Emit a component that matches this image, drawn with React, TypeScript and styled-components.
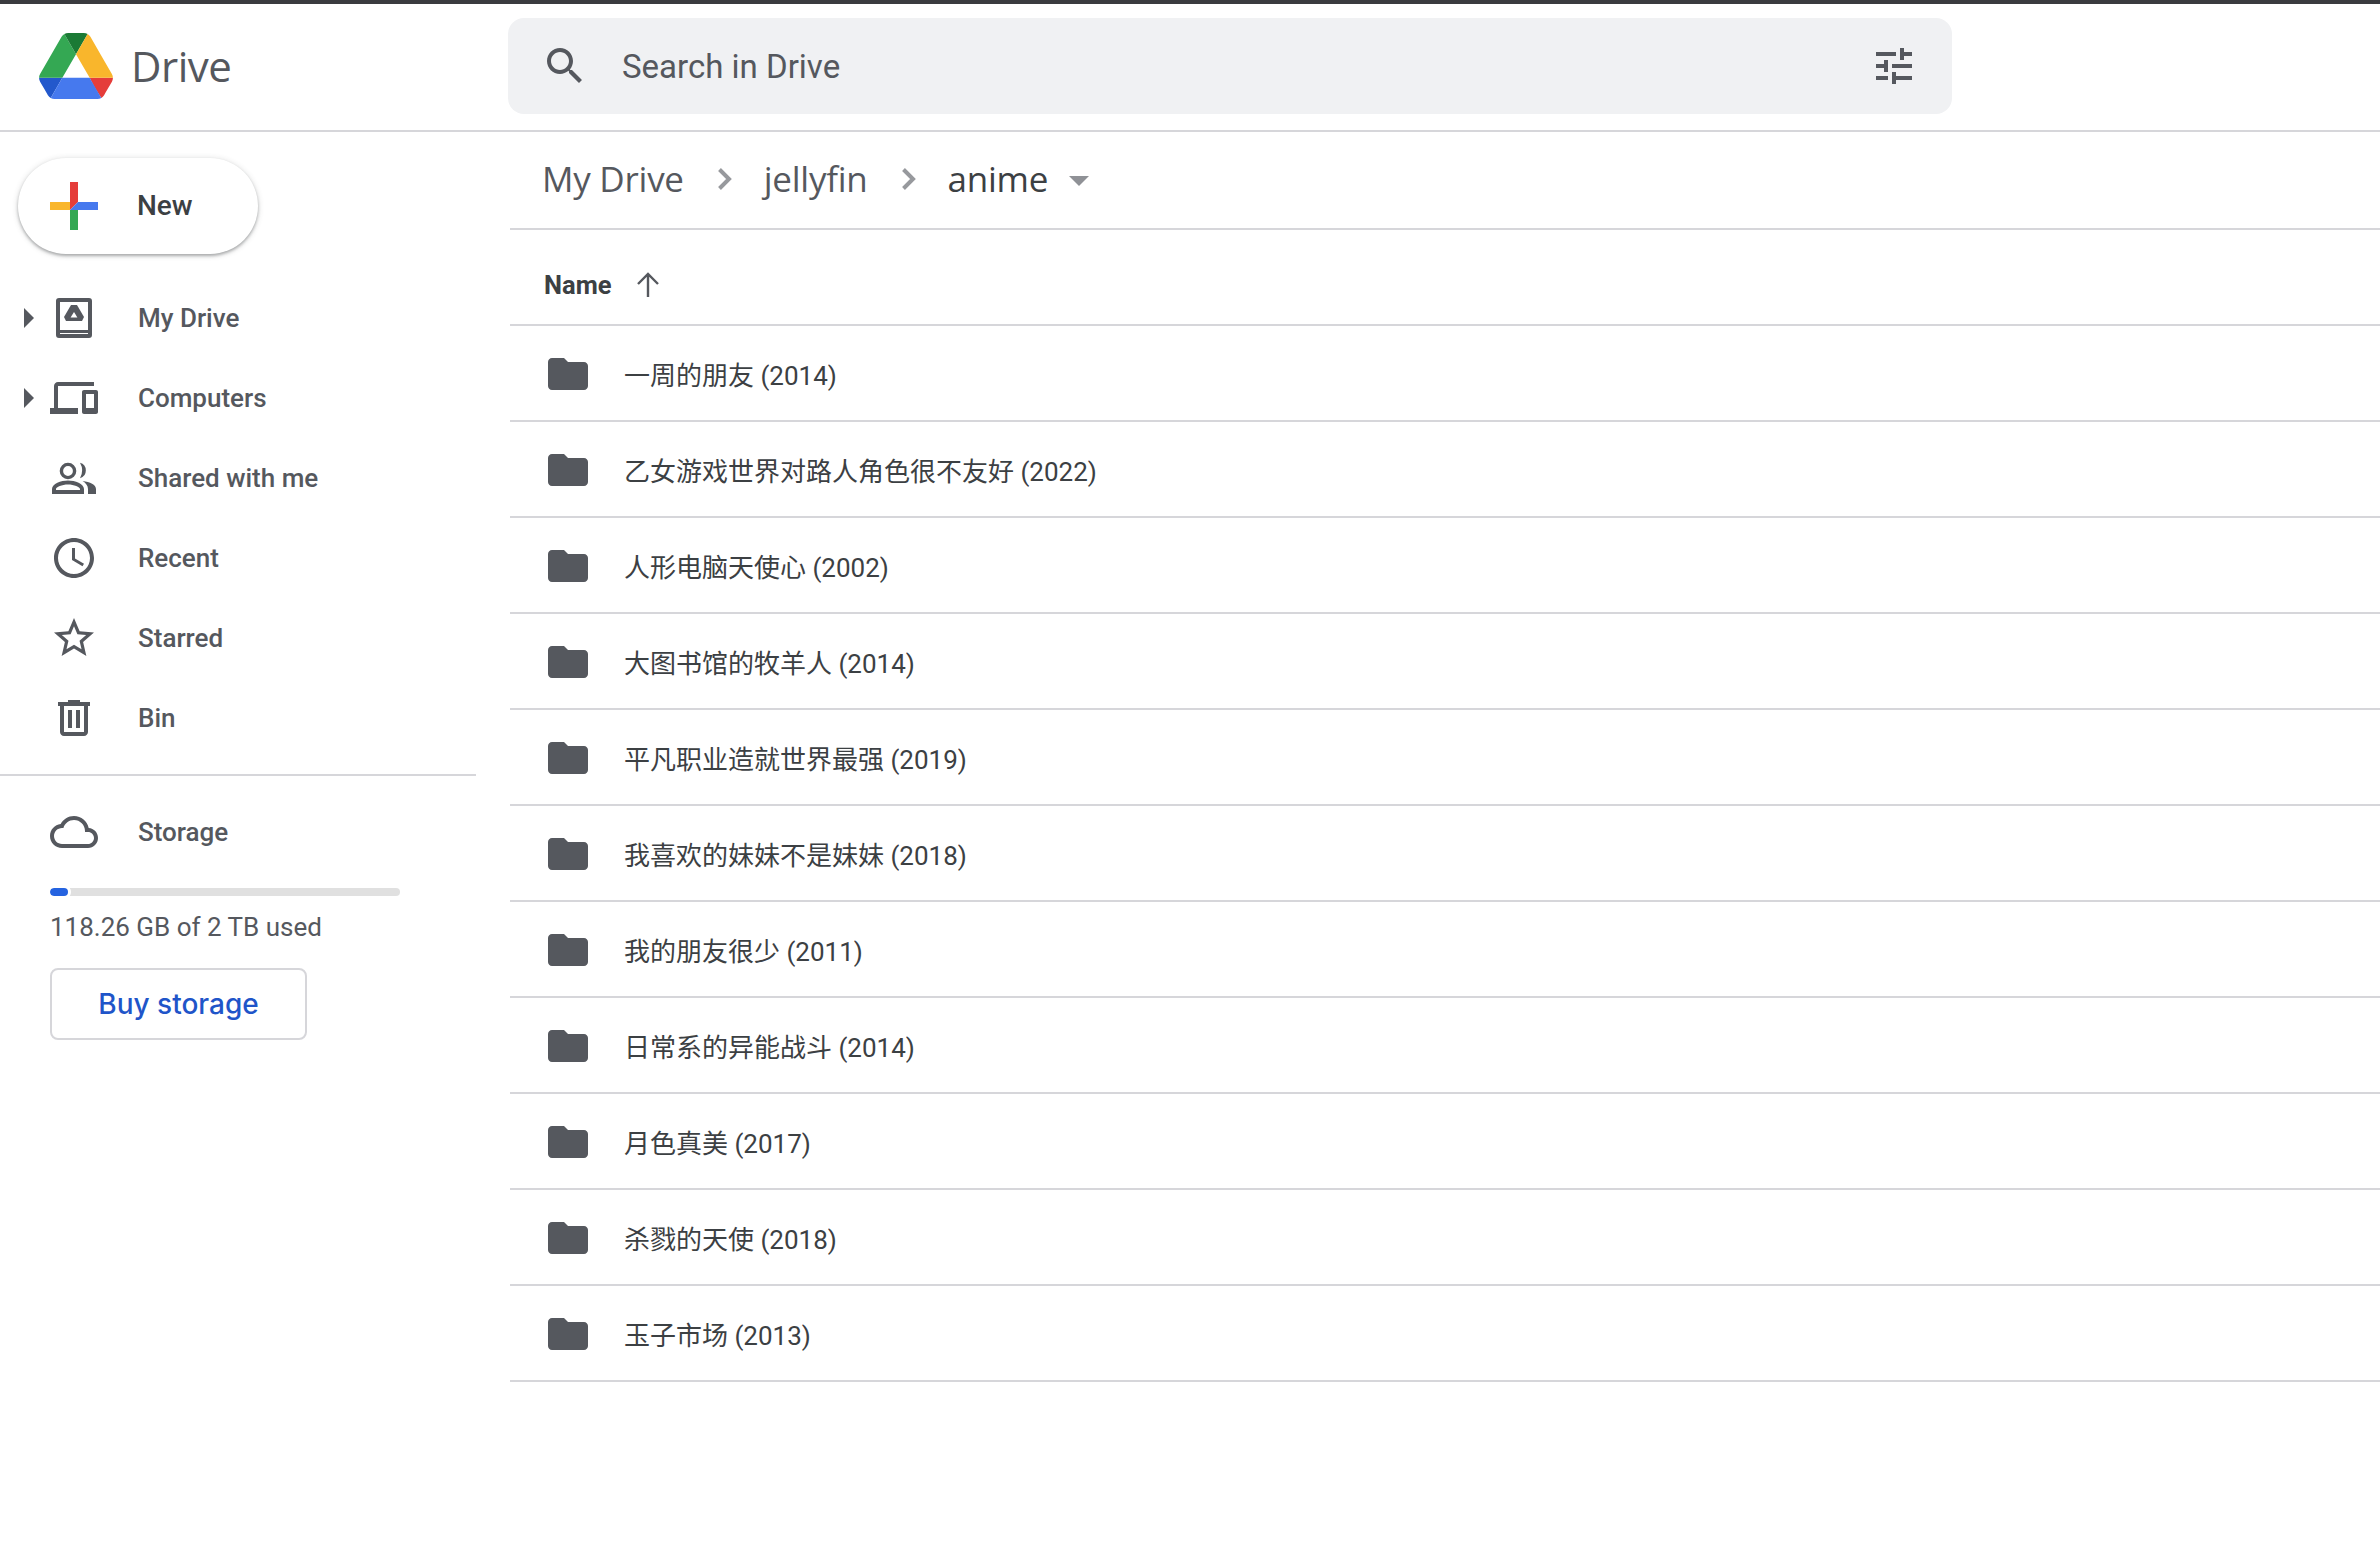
import React from "react";
import styled, { createGlobalStyle } from "styled-components";

const GlobalStyle = createGlobalStyle`
  html, body {
    margin: 0;
    padding: 0;
    background: #fff;
    font-family: Roboto, "Noto Sans CJK SC", sans-serif;
  }
  * { box-sizing: border-box; }
`;

const ICON = "#55585e";
const LINE = "#d6d6da";

const Page = styled.div`
  width: 2380px;
  height: 1550px;
  display: flex;
  flex-direction: column;
  overflow: hidden;
  background: #fff;
`;

const TopBar = styled.header`
  height: 132px;
  flex: none;
  display: flex;
  align-items: center;
  padding-bottom: 2px;
  border-top: 4px solid #3a3b3f;
  border-bottom: 2px solid ${LINE};
`;

const Brand = styled.div`
  width: 508px;
  flex: none;
  display: flex;
  align-items: center;
  gap: 18px;
  padding-left: 39px;
`;

const BrandName = styled.span`
  padding-bottom: 1px;
  font-family: "Open Sans", Roboto, sans-serif;
  font-size: 42px;
  color: ${ICON};
  letter-spacing: -0.5px;
`;

const SearchBox = styled.div`
  width: 1444px;
  height: 96px;
  display: flex;
  align-items: center;
  padding: 0 34px 0 33px;
  background: #f0f1f3;
  border-radius: 16px;
`;

const SearchText = styled.span`
  flex: 1;
  margin: 1px 0 0 33px;
  font-size: 33px;
  color: ${ICON};
`;

const Body = styled.div`
  flex: 1;
  display: flex;
  min-height: 0;
`;

const Sidebar = styled.aside`
  width: 510px;
  flex: none;
  display: flex;
  flex-direction: column;
`;

const NewButton = styled.div`
  width: 240px;
  height: 96px;
  margin: 26px 0 24px 18px;
  display: flex;
  align-items: center;
  gap: 39px;
  padding-left: 32px;
  border-radius: 48px;
  background: #fff;
  box-shadow: 0 2px 3px rgba(60, 64, 67, 0.35), 0 1px 6px rgba(60, 64, 67, 0.2);
  font-size: 28px;
  font-weight: 500;
  color: #3c4043;
`;

const NewLabel = styled.span`
  padding-bottom: 2px;
`;

const NavRow = styled.div`
  height: 80px;
  display: flex;
  align-items: center;
  padding-left: 24px;
`;

const CaretSlot = styled.div`
  width: 26px;
  flex: none;
`;

const Caret = styled.div`
  width: 0;
  height: 0;
  border-left: 10px solid ${ICON};
  border-top: 10px solid transparent;
  border-bottom: 10px solid transparent;
`;

const NavLabel = styled.span`
  margin-left: 40px;
  padding-bottom: 1px;
  font-size: 26px;
  font-weight: 500;
  color: ${ICON};
`;

const Divider = styled.div`
  width: 476px;
  height: 2px;
  margin: 16px 0;
  background: ${LINE};
`;

const StorageBlock = styled.div`
  display: flex;
  flex-direction: column;
  align-items: flex-start;
  padding: 16px 0 0 50px;
`;

const Meter = styled.div`
  width: 350px;
  height: 8px;
  border-radius: 4px;
  background: #e0e0e0;
  overflow: hidden;
`;

const MeterFill = styled.div`
  height: 100%;
  border-radius: 4px;
  background: #2563e0;
  box-shadow: 0 0 0 3px #fff;
`;

const StorageText = styled.div`
  margin-top: 16px;
  font-size: 26px;
  line-height: 30px;
  color: ${ICON};
`;

const BuyButton = styled.div`
  width: 257px;
  height: 72px;
  margin-top: 26px;
  display: flex;
  align-items: center;
  justify-content: center;
  border: 2px solid ${LINE};
  border-radius: 8px;
  font-family: Inter, Roboto, sans-serif;
  font-size: 28px;
  font-weight: 500;
  color: #1f55c9;
`;

const Main = styled.main`
  flex: 1;
  display: flex;
  flex-direction: column;
  min-width: 0;
`;

const Breadcrumb = styled.div`
  height: 98px;
  display: flex;
  align-items: center;
  padding: 0 0 3px 32px;
  border-bottom: 2px solid ${LINE};
  font-family: "Open Sans", Roboto, sans-serif;
  font-size: 35px;
  letter-spacing: -0.25px;
`;

const Crumb = styled.span<{ $current?: boolean }>`
  color: ${(p) => (p.$current ? "#3c4043" : ICON)};
`;

const Chevron = styled.svg`
  width: 15px;
  height: 24px;
  margin: 0 32px 0 33px;
`;

const DropCaret = styled.div`
  width: 0;
  height: 0;
  margin-left: 21px;
  margin-top: 4px;
  border-top: 10px solid #8f9196;
  border-left: 10px solid transparent;
  border-right: 10px solid transparent;
`;

const ListHeader = styled.div`
  height: 96px;
  display: flex;
  align-items: center;
  gap: 24px;
  padding: 16px 0 0 34px;
  border-bottom: 2px solid ${LINE};
  font-size: 25.5px;
  font-weight: 700;
  color: #3c4043;
`;

const FolderRow = styled.div`
  height: 96px;
  display: flex;
  align-items: center;
  gap: 32px;
  padding-left: 34px;
  border-bottom: 2px solid ${LINE};
`;

const FolderSlot = styled.div`
  display: flex;
  padding-top: 2px;
`;

const FolderName = styled.span`
  font-family: Roboto, "Noto Sans CJK SC", sans-serif;
  font-size: 26px;
  color: #3c4043;
`;

const Glyph = ({ d, size = 48 }: { d: string; size?: number }) => (
  <svg width={size} height={size} viewBox="0 0 24 24" fill={ICON} style={{ flex: "none" }}>
    <path d={d} />
  </svg>
);

const DriveLogo = () => (
  <svg width="74" height="66" viewBox="0 0 87.3 78">
    <path d="m6.6 66.85 3.85 6.65c.8 1.4 1.95 2.5 3.3 3.3l13.75-23.8h-27.5c0 1.55.4 3.1 1.2 4.5z" fill="#2358cc" />
    <path d="m43.65 25-13.75-23.8c-1.35.8-2.5 1.9-3.3 3.3l-25.4 44a9.06 9.06 0 0 0 -1.2 4.5h27.5z" fill="#34a853" />
    <path d="m73.55 76.8c1.35-.8 2.5-1.9 3.3-3.3l1.6-2.75 7.65-13.25c.8-1.4 1.2-2.95 1.2-4.5h-27.502l5.852 11.5z" fill="#e53d3a" />
    <path d="m43.65 25 13.75-23.8c-1.35-.8-2.9-1.2-4.5-1.2h-18.5c-1.6 0-3.15.45-4.5 1.2z" fill="#1b7a35" />
    <path d="m59.8 53h-32.3l-13.75 23.8c1.35.8 2.9 1.2 4.5 1.2h50.8c1.6 0 3.15-.45 4.5-1.2z" fill="#4679ee" />
    <path d="m73.4 26.5-12.7-22c-.8-1.4-1.95-2.5-3.3-3.3l-13.75 23.8 16.15 28h27.45c0-1.55-.4-3.1-1.2-4.5z" fill="#f9b62c" />
  </svg>
);

const PlusIcon = () => (
  <svg width="48" height="48" viewBox="0 0 48 48" style={{ flex: "none" }}>
    <path d="M20 0h8v20l-8 8z" fill="#e53d3a" />
    <path d="M0 20h20v8H0z" fill="#f9b62c" />
    <path d="M28 20h20v8H20z" fill="#4679ee" />
    <path d="M20 28h8v20h-8z" fill="#34a853" />
  </svg>
);

const MyDriveIcon = () => (
  <svg width="48" height="48" viewBox="0 0 48 48" style={{ flex: "none" }}>
    <path
      fillRule="evenodd"
      fill={ICON}
      d="M9 4h30a3 3 0 0 1 3 3v34a3 3 0 0 1-3 3H9a3 3 0 0 1-3-3V7a3 3 0 0 1 3-3zm1 4v28h28V8H10zm0 31v1h28v-1H10z"
    />
    <path fill={ICON} d="M21 11h6l7 12-2 4H16l-2-4z" />
    <path fill="#fff" d="M24 18l3.4 5.5h-6.8z" />
  </svg>
);

const SharedIcon = () => (
  <svg width="48" height="48" viewBox="0 0 24 24" style={{ flex: "none" }}>
    <circle cx="9" cy="8.5" r="3.3" fill="none" stroke={ICON} strokeWidth="1.7" />
    <path fill={ICON} d="M15 4.4A4 4 0 0 1 15 12.1Q17.2 8.25 15 4.4z" />
    <path
      fill={ICON}
      fillRule="evenodd"
      d="M9 13.2C5.5 13.2 1 14.8 1 17.5V20H17V17.5C17 14.8 12.5 13.2 9 13.2zM3 18v-.5c0-1 3-2.3 6-2.3s6 1.3 6 2.3v.5z"
    />
    <path fill={ICON} d="M16.3 13.5C20 14 23 15.2 23 17.5V20H19V17.5C19 15.8 17.8 14.5 16.3 13.5z" />
  </svg>
);

const SEARCH =
  "M15.5 14h-.79l-.28-.27C15.41 12.59 16 11.11 16 9.5 16 5.91 13.09 3 9.5 3S3 5.91 3 9.5 5.91 16 9.5 16c1.61 0 3.09-.59 4.23-1.57l.27.28v.79l5 4.99L20.49 19l-4.99-5zm-6 0C7.01 14 5 11.99 5 9.5S7.01 5 9.5 5 14 7.01 14 9.5 11.99 14 9.5 14z";
const TUNE =
  "M3 17v2h6v-2H3zM3 5v2h10V5H3zm10 16v-2h8v-2h-8v-2h-2v6h2zM7 9v2H3v2h4v2h2V9H7zm14 4v-2H11v2h10zm-6-4h2V7h4V5h-4V3h-2v6z";
const DEVICES =
  "M4 6h18V4H4c-1.1 0-2 .9-2 2v11H0v3h14v-3H4V6zm19 2h-6c-.55 0-1 .45-1 1v10c0 .55.45 1 1 1h6c.55 0 1-.45 1-1V9c0-.55-.45-1-1-1zm-1 9h-4v-7h4v7z";
const CLOCK =
  "M11.99 2C6.47 2 2 6.48 2 12s4.47 10 9.99 10C17.52 22 22 17.52 22 12S17.52 2 11.99 2zM12 20c-4.42 0-8-3.58-8-8s3.58-8 8-8 8 3.58 8 8-3.58 8-8 8zm.5-13H11v6l5.25 3.15.75-1.23-4.5-2.67z";
const STAR =
  "M22 9.24l-7.19-.62L12 2 9.19 8.63 2 9.24l5.46 4.73L5.82 21 12 17.27 18.18 21l-1.63-7.03L22 9.24zM12 15.4l-3.76 2.27 1-4.28-3.32-2.88 4.38-.38L12 6.1l1.71 4.04 4.38.38-3.32 2.88 1 4.28L12 15.4z";
const BIN =
  "M15 4V3H9v1H4v2h1v13c0 1.1.9 2 2 2h10c1.1 0 2-.9 2-2V6h1V4h-5zm2 15H7V6h10v13zM9 8h2v9H9zm4 0h2v9h-2z";
const CLOUD =
  "M19.35 10.04C18.67 6.59 15.64 4 12 4 9.11 4 6.6 5.64 5.35 8.04 2.34 8.36 0 10.91 0 14c0 3.31 2.69 6 6 6h13c2.76 0 5-2.24 5-5 0-2.64-2.05-4.78-4.65-4.96zM19 18H6c-2.21 0-4-1.79-4-4s1.79-4 4-4h.71C7.37 7.69 9.48 6 12 6c3.04 0 5.5 2.46 5.5 5.5v.5H19c1.66 0 3 1.34 3 3s-1.34 3-3 3z";
const FOLDER = "M10 4H4c-1.1 0-2 .9-2 2v12c0 1.1.9 2 2 2h16c1.1 0 2-.9 2-2V8c0-1.1-.9-2-2-2h-8l-2-2z";

const folders = [
  "一周的朋友 (2014)",
  "乙女游戏世界对路人角色很不友好 (2022)",
  "人形电脑天使心 (2002)",
  "大图书馆的牧羊人 (2014)",
  "平凡职业造就世界最强 (2019)",
  "我喜欢的妹妹不是妹妹 (2018)",
  "我的朋友很少 (2011)",
  "日常系的异能战斗 (2014)",
  "月色真美 (2017)",
  "杀戮的天使 (2018)",
  "玉子市场 (2013)",
];

const navItems: { label: string; icon: React.ReactNode; caret?: boolean }[] = [
  { label: "My Drive", icon: <MyDriveIcon />, caret: true },
  { label: "Computers", icon: <Glyph d={DEVICES} />, caret: true },
  { label: "Shared with me", icon: <SharedIcon /> },
  { label: "Recent", icon: <Glyph d={CLOCK} /> },
  { label: "Starred", icon: <Glyph d={STAR} /> },
  { label: "Bin", icon: <Glyph d={BIN} /> },
];

const CrumbChevron = () => (
  <Chevron viewBox="0 0 15 24">
    <path d="M2.5 2.5 12 12 2.5 21.5" fill="none" stroke="#97999d" strokeWidth="4" />
  </Chevron>
);

export default function App(): React.JSX.Element {
  const usedPercent = 5.2;

  return (
    <Page>
      <GlobalStyle />
      <TopBar>
        <Brand>
          <DriveLogo />
          <BrandName>Drive</BrandName>
        </Brand>
        <SearchBox>
          <Glyph d={SEARCH} />
          <SearchText>Search in Drive</SearchText>
          <Glyph d={TUNE} />
        </SearchBox>
      </TopBar>
      <Body>
        <Sidebar>
          <NewButton>
            <PlusIcon />
            <NewLabel>New</NewLabel>
          </NewButton>
          {navItems.map((item) => (
            <NavRow key={item.label}>
              <CaretSlot>{item.caret && <Caret />}</CaretSlot>
              {item.icon}
              <NavLabel>{item.label}</NavLabel>
            </NavRow>
          ))}
          <Divider />
          <NavRow>
            <CaretSlot />
            <Glyph d={CLOUD} />
            <NavLabel>Storage</NavLabel>
          </NavRow>
          <StorageBlock>
            <Meter>
              <MeterFill style={{ width: `${usedPercent}%` }} />
            </Meter>
            <StorageText>118.26 GB of 2 TB used</StorageText>
            <BuyButton>Buy storage</BuyButton>
          </StorageBlock>
        </Sidebar>
        <Main>
          <Breadcrumb>
            <Crumb>My Drive</Crumb>
            <CrumbChevron />
            <Crumb>jellyfin</Crumb>
            <CrumbChevron />
            <Crumb $current>anime</Crumb>
            <DropCaret />
          </Breadcrumb>
          <ListHeader>
            Name
            <svg width="24" height="26" viewBox="0 0 24 26">
              <path d="M12 25V2M2 12 12 2l10 10" fill="none" stroke={ICON} strokeWidth="2.4" />
            </svg>
          </ListHeader>
          {folders.map((name) => (
            <FolderRow key={name}>
              <FolderSlot>
                <Glyph d={FOLDER} />
              </FolderSlot>
              <FolderName>{name}</FolderName>
            </FolderRow>
          ))}
        </Main>
      </Body>
    </Page>
  );
}
